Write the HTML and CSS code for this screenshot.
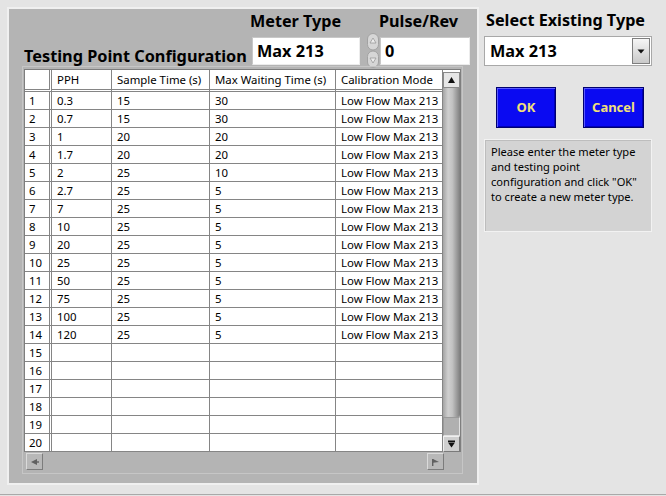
FILE: index.html
```html
<!DOCTYPE html>
<html>
<head>
<meta charset="utf-8">
<link rel="stylesheet" href="styles.css">
</head>
<body>
<div class="page">
  <div class="panel">
    <div class="head">
      <div class="title">Testing Point Configuration</div>
      <div class="field meter">
        <div class="label">Meter Type</div>
        <div class="box">Max 213</div>
      </div>
      <div class="spin">
        <svg width="12" height="35" viewBox="0 0 12 35">
          <rect x="0.5" y="0.5" width="11" height="16.5" rx="5.5" fill="#d6d6d6" stroke="#a2a2a2"/>
          <rect x="0.5" y="18" width="11" height="16.5" rx="5.5" fill="#d6d6d6" stroke="#a2a2a2"/>
          <polygon points="6,5 9,10 3,10" fill="#ececec" stroke="#9a9a9a" stroke-width="0.8"/>
          <polygon points="3,25 9,25 6,30" fill="#ececec" stroke="#9a9a9a" stroke-width="0.8"/>
        </svg>
      </div>
      <div class="field pulse">
        <div class="label">Pulse/Rev</div>
        <div class="box">0</div>
      </div>
    </div>
    <div class="frame">
      <div class="tablewrap">
        <div class="grid">
          <div class="row hdr"><div class="c c0"></div><div class="c">PPH</div><div class="c">Sample Time (s)</div><div class="c">Max Waiting Time (s)</div><div class="c">Calibration Mode</div></div>
          <div class="row"><div class="c c0">1</div><div class="c">0.3</div><div class="c">15</div><div class="c">30</div><div class="c">Low Flow Max 213</div></div>
          <div class="row"><div class="c c0">2</div><div class="c">0.7</div><div class="c">15</div><div class="c">30</div><div class="c">Low Flow Max 213</div></div>
          <div class="row"><div class="c c0">3</div><div class="c">1</div><div class="c">20</div><div class="c">20</div><div class="c">Low Flow Max 213</div></div>
          <div class="row"><div class="c c0">4</div><div class="c">1.7</div><div class="c">20</div><div class="c">20</div><div class="c">Low Flow Max 213</div></div>
          <div class="row"><div class="c c0">5</div><div class="c">2</div><div class="c">25</div><div class="c">10</div><div class="c">Low Flow Max 213</div></div>
          <div class="row"><div class="c c0">6</div><div class="c">2.7</div><div class="c">25</div><div class="c">5</div><div class="c">Low Flow Max 213</div></div>
          <div class="row"><div class="c c0">7</div><div class="c">7</div><div class="c">25</div><div class="c">5</div><div class="c">Low Flow Max 213</div></div>
          <div class="row"><div class="c c0">8</div><div class="c">10</div><div class="c">25</div><div class="c">5</div><div class="c">Low Flow Max 213</div></div>
          <div class="row"><div class="c c0">9</div><div class="c">20</div><div class="c">25</div><div class="c">5</div><div class="c">Low Flow Max 213</div></div>
          <div class="row"><div class="c c0">10</div><div class="c">25</div><div class="c">25</div><div class="c">5</div><div class="c">Low Flow Max 213</div></div>
          <div class="row"><div class="c c0">11</div><div class="c">50</div><div class="c">25</div><div class="c">5</div><div class="c">Low Flow Max 213</div></div>
          <div class="row"><div class="c c0">12</div><div class="c">75</div><div class="c">25</div><div class="c">5</div><div class="c">Low Flow Max 213</div></div>
          <div class="row"><div class="c c0">13</div><div class="c">100</div><div class="c">25</div><div class="c">5</div><div class="c">Low Flow Max 213</div></div>
          <div class="row"><div class="c c0">14</div><div class="c">120</div><div class="c">25</div><div class="c">5</div><div class="c">Low Flow Max 213</div></div>
          <div class="row"><div class="c c0">15</div><div class="c"></div><div class="c"></div><div class="c"></div><div class="c"></div></div>
          <div class="row"><div class="c c0">16</div><div class="c"></div><div class="c"></div><div class="c"></div><div class="c"></div></div>
          <div class="row"><div class="c c0">17</div><div class="c"></div><div class="c"></div><div class="c"></div><div class="c"></div></div>
          <div class="row"><div class="c c0">18</div><div class="c"></div><div class="c"></div><div class="c"></div><div class="c"></div></div>
          <div class="row"><div class="c c0">19</div><div class="c"></div><div class="c"></div><div class="c"></div><div class="c"></div></div>
          <div class="row"><div class="c c0">20</div><div class="c"></div><div class="c"></div><div class="c"></div><div class="c"></div></div>
        </div>
        <div class="vscroll">
          <div class="vtop">
            <div class="sbtn up">
              <svg width="9" height="8" viewBox="0 0 9 8"><polygon points="4.5,1 8,7 1,7" fill="#111"/></svg>
            </div>
          </div>
          <div class="thumb"></div>
          <div class="track"></div>
          <div class="sbtn down">
            <svg width="9" height="8" viewBox="0 0 9 8"><rect x="1" y="0.5" width="7" height="1.5" fill="#111"/><polygon points="1,2.5 8,2.5 4.5,7.5" fill="#111"/></svg>
          </div>
        </div>
      </div>
      <div class="hscroll">
        <div class="hbtn">
          <svg width="9" height="8" viewBox="0 0 9 8"><polygon points="1,4 7,1 7,7" fill="#606060"/><rect x="7" y="3.3" width="2" height="1.4" fill="#606060"/></svg>
        </div>
        <div class="hbtn">
          <svg width="9" height="8" viewBox="0 0 9 8"><rect x="1" y="1" width="1.4" height="7" fill="#606060"/><polygon points="2,1 8,4 2,4.8" fill="#606060"/></svg>
        </div>
      </div>
    </div>
  </div>
  <div class="side">
    <div class="label slabel">Select Existing Type</div>
    <div class="dropdown">
      <div class="dtext">Max 213</div>
      <div class="dbtn">
        <svg width="8" height="5" viewBox="0 0 8 5"><polygon points="0.5,0.5 7.5,0.5 4,4.5" fill="#111"/></svg>
      </div>
    </div>
    <div class="buttons">
      <div class="btn ok">OK</div>
      <div class="btn cancel">Cancel</div>
    </div>
    <div class="msg">Please enter the meter type and testing point configuration and click "OK" to create a new meter type.</div>
  </div>
</div>
</body>
</html>
```
FILE: styles.css
```css
html, body {
  margin: 0;
  padding: 0;
}
body {
  width: 666px;
  height: 496px;
  overflow: hidden;
  background: #e4e4e4;
  font-family: "Noto Sans", "Open Sans", sans-serif;
  color: #000;
}
.page {
  display: flex;
  align-items: flex-start;
  height: 495px;
  box-sizing: border-box;
  border-bottom: 1px solid #a9a9a9;
}
.panel {
  margin: 9px 0 0 9px;
  width: 468px;
  height: 474px;
  background: #b4b4b4;
  box-shadow: 0 0 0 2px #f0f0f0;
  padding-top: 2px;
  box-sizing: border-box;
  display: flex;
  flex-direction: column;
}
.head {
  display: flex;
  align-items: flex-end;
  padding-left: 15px;
}
.label {
  font-weight: 700;
  font-size: 16.2px;
  line-height: 20px;
  white-space: nowrap;
}
.title {
  width: 226px;
  font-weight: 700;
  font-size: 16.3px;
  line-height: 20px;
  white-space: nowrap;
  margin-bottom: -1px;
}
.field {
  display: flex;
  flex-direction: column;
}
.field .label {
  margin-bottom: 6px;
}
.meter {
  width: 110px;
}
.box {
  height: 28px;
  box-sizing: border-box;
  background: #fff;
  border: 1px solid #c8c8c8;
  border-right-color: #ececec;
  border-bottom-color: #ececec;
  font-weight: 700;
  font-size: 16.3px;
  line-height: 26px;
  padding-left: 4px;
}
.meter .box {
  margin-left: 2px;
  width: 108px;
}
.spin {
  width: 12px;
  height: 35px;
  margin-left: 7px;
  margin-bottom: -3px;
}
.spin svg {
  display: block;
}
.pulse {
  width: 91px;
}
.pulse .box {
  margin-left: 1px;
  width: 90px;
}
.frame {
  margin: 1px 0 0 13px;
  width: 441px;
  height: 408px;
  box-sizing: border-box;
  border: 1px solid #c6c6c6;
  padding: 2px 0 0 1px;
}
.tablewrap {
  display: flex;
  width: 437px;
  background: #fff;
  border: 1px solid #7e7e7e;
  border-bottom: none;
  box-sizing: border-box;
}
.grid {
  width: 418px;
  font-size: 11.4px;
}
.row {
  display: grid;
  grid-template-columns: 27px 60px 98px 126px 107px;
  height: 18px;
}
.c {
  box-sizing: border-box;
  border-right: 1px solid #858585;
  border-bottom: 1px solid #858585;
  line-height: 17px;
  padding-left: 5px;
  white-space: nowrap;
  overflow: hidden;
}
.c0 {
  border-right: 3px double #858585;
  padding-left: 4px;
}
.hdr {
  height: 22px;
}
.hdr .c {
  border-bottom: 3px double #858585;
  line-height: 19px;
}
.vscroll {
  width: 17px;
  display: flex;
  flex-direction: column;
  background: #a8a8a8;
}
.vtop {
  height: 18px;
  background: #fff;
  display: flex;
  align-items: flex-end;
}
.sbtn {
  width: 17px;
  height: 16px;
  box-sizing: border-box;
  border: 1px solid #8a8a8a;
  background: #e6e6e6;
  display: flex;
  align-items: center;
  justify-content: center;
}
.sbtn svg {
  display: block;
}
.down {
  background: #cfcfcf;
  border-color: #f0f0f0 #7a7a7a #7a7a7a #f0f0f0;
}
.thumb {
  height: 329px;
  background: linear-gradient(to right, #a4a4a4 0%, #cfcfcf 30%, #c2c2c2 55%, #8e8e8e 90%, #7e7e7e 100%);
  border-radius: 0 0 3px 3px;
}
.track {
  height: 19px;
  box-sizing: border-box;
  background: #b0b0b0;
  border: 1px solid #9a9a9a;
  border-right-color: #e0e0e0;
  border-bottom-color: #e0e0e0;
}
.hscroll {
  display: flex;
  justify-content: space-between;
  width: 418px;
  margin: 1px 0 0 2px;
}
.hbtn {
  width: 17px;
  height: 17px;
  box-sizing: border-box;
  background: #b8b8b8;
  border: 1px solid #dadada;
  border-right-color: #7c7c7c;
  border-bottom-color: #7c7c7c;
  display: flex;
  align-items: center;
  justify-content: center;
}
.hbtn svg {
  display: block;
}
.side {
  margin-left: 7px;
  width: 168px;
  padding-top: 10px;
  display: flex;
  flex-direction: column;
}
.slabel {
  padding-left: 2px;
}
.dropdown {
  margin-top: 6px;
  height: 30px;
  box-sizing: border-box;
  background: #fff;
  border: 1px solid #a8a8a8;
  display: flex;
  align-items: center;
  padding: 0 1px 0 5px;
}
.dtext {
  flex: 1;
  font-weight: 700;
  font-size: 16.3px;
  line-height: 28px;
}
.dbtn {
  width: 18px;
  height: 26px;
  box-sizing: border-box;
  border: 1px solid #7e7e7e;
  background: linear-gradient(#f6f6f6, #c9c9c9);
  display: flex;
  align-items: center;
  justify-content: center;
}
.dbtn svg {
  display: block;
}
.buttons {
  display: flex;
  margin-top: 21px;
  padding-left: 12px;
  gap: 27px;
}
.btn {
  height: 41px;
  box-sizing: border-box;
  background: #0a0af2;
  border: 1px solid #000070;
  box-shadow: inset 1px 1px 0 #5a5aff, inset -1px -1px 0 #0000b8;
  color: #f2e07a;
  font-weight: 700;
  font-size: 13px;
  line-height: 39px;
  text-align: center;
}
.ok {
  width: 60px;
}
.cancel {
  width: 61px;
}
.msg {
  margin-top: 11px;
  height: 93px;
  box-sizing: border-box;
  background: #d3d3d3;
  border: 1px solid #f2f2f2;
  box-shadow: inset 1px 1px 0 #bdbdbd;
  padding: 4px 4px 0 6px;
  font-size: 11.1px;
  line-height: 15px;
}
```
